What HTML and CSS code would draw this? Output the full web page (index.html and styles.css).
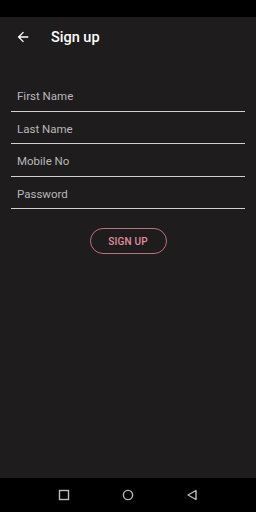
FILE: index.html
```html
<!DOCTYPE html>
<html>
    <head>
        <title>Sign up</title>
        <link rel="stylesheet" href="styles.css">
    </head>
    <body>
        <div class="status-bar"></div>
        <div class="app-bar">
            <svg class="back" width="16" height="16" viewBox="0 0 24 24">
                <path d="M20 11H7.83l5.59-5.59L12 4l-8 8 8 8 1.41-1.41L7.83 13H20v-2z" fill="#fff"/>
            </svg>
            <span class="title">Sign up</span>
        </div>
        <div class="content">
            <div class="form">
                <div class="field">First Name</div>
                <div class="field">Last Name</div>
                <div class="field">Mobile No</div>
                <div class="field">Password</div>
            </div>
            <div class="button-row">
                <button class="signup">SIGN UP</button>
            </div>
        </div>
        <div class="nav-bar">
            <svg width="12" height="12" viewBox="0 0 12 12"><rect x="1.5" y="1.5" width="9" height="9" fill="none" stroke="#bbb" stroke-width="1.4"/></svg>
            <svg width="12" height="12" viewBox="0 0 12 12"><circle cx="6" cy="6" r="4.6" fill="none" stroke="#bbb" stroke-width="1.4"/></svg>
            <svg width="12" height="12" viewBox="0 0 12 12"><path d="M10 1.5 L2 6 L10 10.5 Z" fill="none" stroke="#bbb" stroke-width="1.4" stroke-linejoin="round"/></svg>
        </div>
    </body>
</html>
```

FILE: styles.css
```css
body {
    margin: 0;
    width: 256px;
    height: 512px;
    background-color: #1e1c1d;
    font-family: Roboto, "Noto Sans", sans-serif;
    display: flex;
    flex-direction: column;
}

.status-bar {
    height: 17px;
    background-color: #000;
}

.app-bar {
    height: 40px;
    display: flex;
    align-items: center;
    padding-left: 15px;
}

.back {
    margin-right: 20px;
}

.title {
    color: #fff;
    font-size: 14.5px;
    font-weight: 500;
}

.content {
    flex: 1;
    padding: 22px 11px 0 11px;
}

.field {
    height: 31.5px;
    border-bottom: 1.5px solid #d0d0d0;
    color: #b8b8b8;
    font-size: 11.5px;
    padding-left: 6px;
    line-height: 34px;
}

.button-row {
    display: flex;
    justify-content: center;
    margin-top: 19px;
}

.signup {
    width: 77px;
    height: 26px;
    background: transparent;
    border: 1px solid #b9717f;
    border-radius: 13px;
    color: #e0909f;
    font-family: Roboto, sans-serif;
    font-size: 10px;
    font-weight: 500;
    letter-spacing: 0.2px;
    padding: 0;
}

.nav-bar {
    height: 34px;
    background-color: #000;
    display: flex;
    justify-content: center;
    align-items: center;
    gap: 52px;
}
```
